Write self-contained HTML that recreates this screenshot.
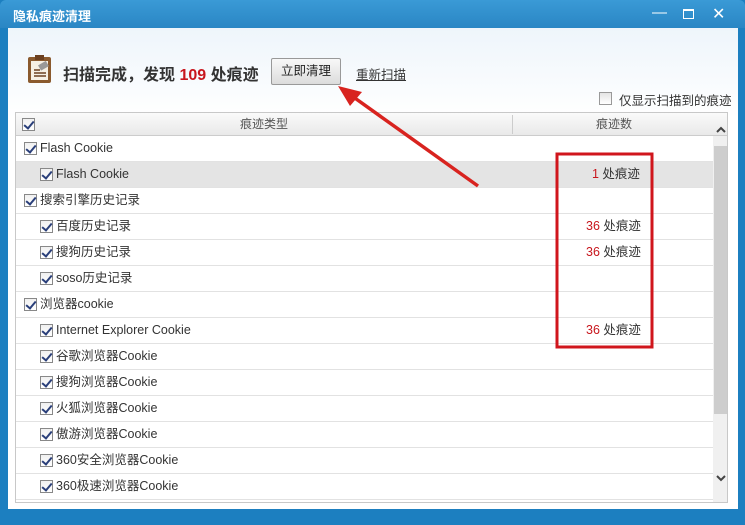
<!DOCTYPE html>
<html><head><meta charset="utf-8"><style>
*{margin:0;padding:0;box-sizing:border-box}
body{width:745px;height:525px;overflow:hidden;background:#1c7fc0;font-family:"Liberation Sans","Noto Sans CJK SC",sans-serif;position:relative}
.title{position:absolute;left:0;top:0;width:745px;height:28px;background:linear-gradient(#3a9ad6,#2a86c4);color:#fff;font-size:13px;font-weight:bold;padding:6px 0 0 13px;border-radius:6px 6px 0 0}
.ctl{position:absolute;top:4px;color:#fff;font-size:15px}
.content{position:absolute;left:8px;top:28px;width:730px;height:481px;background:linear-gradient(#eef5fb 0,#fff 90px,#fff)}
.tbl{position:absolute;left:15px;top:112px;width:713px;height:391px;border:1px solid #c8c8c8;background:#fff;overflow:hidden}
.hdr{position:absolute;left:0;top:0;width:713px;height:23px;background:linear-gradient(#fafafa,#e9e9e9);border-bottom:1px solid #ccc;font-size:12px;color:#555}
.row{position:absolute;left:0;width:697px;height:26px;border-bottom:1px solid #e2e2e2;font-size:12.5px;color:#333;line-height:25px}
.cb{position:absolute;top:6px;width:13px;height:13px;border:1px solid #888;background:linear-gradient(#f0f0f0,#fff);}
.cb:after{content:"";position:absolute;left:3px;top:0px;width:4px;height:8px;border:solid #2a3f7a;border-width:0 2px 2px 0;transform:rotate(40deg)}
.num{position:absolute;left:570px;color:#333}
.num b{color:#c8161d;font-weight:normal}
</style></head><body>
<div class="title">隐私痕迹清理</div>
<div class="ctl" style="left:652px;top:4px">—</div>
<div style="position:absolute;left:683px;top:9px;width:11px;height:10px;border:1.5px solid #fff;border-top-width:2.5px"></div>
<div class="ctl" style="left:712px;top:4px;font-size:16px">✕</div>
<div class="content"></div>
<svg style="position:absolute;left:26px;top:54px" width="28" height="30"><rect x="2" y="3" width="23" height="26" fill="#8a5a2e" rx="2"/><rect x="5" y="7" width="17" height="19" fill="#f6f0e4"/><rect x="9" y="1" width="9" height="5" fill="#6b4020"/><path d="M8 19h12M8 22h12M8 16h6" stroke="#6b4020" stroke-width="1.5"/><rect x="13" y="9" width="9" height="6" fill="#999" transform="rotate(-30 17 12)"/></svg>
<div style="position:absolute;left:63px;top:61px;font-size:16px;font-weight:bold;color:#333">扫描完成，发现 <span style="color:#c8161d">109</span> 处痕迹</div>
<div style="position:absolute;left:271px;top:58px;width:70px;height:27px;border:1px solid #999;border-radius:2px;background:linear-gradient(#f8f8f8,#dcdcdc);font-size:12.5px;text-align:center;line-height:25px;color:#222">立即清理</div>
<div style="position:absolute;left:356px;top:64px;font-size:12.5px;text-decoration:underline;color:#333">重新扫描</div>
<div style="position:absolute;left:599px;top:92px;width:13px;height:13px;border:1px solid #999;background:linear-gradient(#e4e4e4,#fff)"></div>
<div style="position:absolute;left:619px;top:90px;font-size:12.5px;color:#333">仅显示扫描到的痕迹</div>
<div class="tbl">
<div class="hdr"><div class="cb" style="left:6px;top:5px"></div><div style="position:absolute;left:496px;top:2px;width:1px;height:19px;background:#ccc"></div><div style="position:absolute;left:224px;top:2px">痕迹类型</div><div style="position:absolute;left:580px;top:2px">痕迹数</div></div>
<div class="row" style="top:23px"><div class="cb" style="left:8px"></div><span style="position:absolute;left:24px">Flash Cookie</span></div>
<div class="row" style="top:49px;background:#e4e4e4"><div class="cb" style="left:24px"></div><span style="position:absolute;left:40px">Flash Cookie</span><span class="num" style="left:576px"><b>1</b> 处痕迹</span></div>
<div class="row" style="top:75px"><div class="cb" style="left:8px"></div><span style="position:absolute;left:24px">搜索引擎历史记录</span></div>
<div class="row" style="top:101px"><div class="cb" style="left:24px"></div><span style="position:absolute;left:40px">百度历史记录</span><span class="num"><b>36</b> 处痕迹</span></div>
<div class="row" style="top:127px"><div class="cb" style="left:24px"></div><span style="position:absolute;left:40px">搜狗历史记录</span><span class="num"><b>36</b> 处痕迹</span></div>
<div class="row" style="top:153px"><div class="cb" style="left:24px"></div><span style="position:absolute;left:40px">soso历史记录</span></div>
<div class="row" style="top:179px"><div class="cb" style="left:8px"></div><span style="position:absolute;left:24px">浏览器cookie</span></div>
<div class="row" style="top:205px"><div class="cb" style="left:24px"></div><span style="position:absolute;left:40px">Internet Explorer Cookie</span><span class="num"><b>36</b> 处痕迹</span></div>
<div class="row" style="top:231px"><div class="cb" style="left:24px"></div><span style="position:absolute;left:40px">谷歌浏览器Cookie</span></div>
<div class="row" style="top:257px"><div class="cb" style="left:24px"></div><span style="position:absolute;left:40px">搜狗浏览器Cookie</span></div>
<div class="row" style="top:283px"><div class="cb" style="left:24px"></div><span style="position:absolute;left:40px">火狐浏览器Cookie</span></div>
<div class="row" style="top:309px"><div class="cb" style="left:24px"></div><span style="position:absolute;left:40px">傲游浏览器Cookie</span></div>
<div class="row" style="top:335px"><div class="cb" style="left:24px"></div><span style="position:absolute;left:40px">360安全浏览器Cookie</span></div>
<div class="row" style="top:361px"><div class="cb" style="left:24px"></div><span style="position:absolute;left:40px">360极速浏览器Cookie</span></div>
<div style="position:absolute;left:697px;top:23px;width:15px;height:368px;background:#f0f0f0"></div>
<div style="position:absolute;left:698px;top:33px;width:13px;height:268px;background:#cdcdcd"></div>
<svg style="position:absolute;left:699px;top:12px" width="12" height="10"><path d="M2 7l4-4 4 4" stroke="#444" stroke-width="2" fill="none"/></svg>
<svg style="position:absolute;left:699px;top:360px" width="12" height="10"><path d="M2 3l4 4 4-4" stroke="#444" stroke-width="2" fill="none"/></svg>
</div>
<svg style="position:absolute;left:0;top:0" width="745" height="525">
<rect x="557" y="154" width="95" height="193" fill="none" stroke="#d0161c" stroke-width="3"/>
<line x1="478" y1="186" x2="352" y2="96" stroke="#d8231f" stroke-width="3.5"/>
<polygon points="338,86 362,92 350,106" fill="#d8231f"/>
</svg>
</body></html>
